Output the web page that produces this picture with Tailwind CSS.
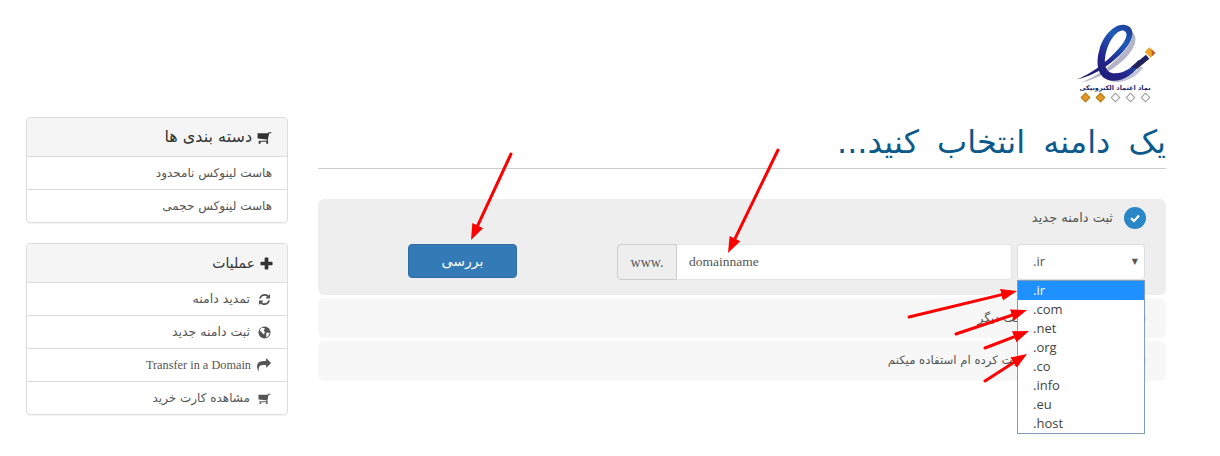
<!DOCTYPE html>
<html lang="fa" dir="rtl">
<head>
<meta charset="utf-8">
<script src="https://cdn.jsdelivr.net/npm/@tailwindcss/browser@4"></script>
</head>
<body class="bg-white">
<div class="relative w-[1220px] h-[456px] overflow-hidden font-['DejaVu_Sans',sans-serif] text-[#333]">

  <header class="h-[117px] pt-[20px] pr-[50px]">
    <div class="w-[110px] flex flex-col items-center">
      <svg class="w-[110px] h-[64px]" viewBox="0 30 330 192" aria-hidden="true">
        <defs>
          <linearGradient id="e1" x1="0" y1="1" x2="1" y2="0">
            <stop offset="0" stop-color="#1a1a5e"/><stop offset=".4" stop-color="#23238a"/><stop offset=".7" stop-color="#1f5cb8"/><stop offset="1" stop-color="#1b2f86"/>
          </linearGradient>
        </defs>
        <path d="M60 218 C105 205 165 160 200 115 C215 92 222 75 212 62 C238 78 225 110 205 135 C170 175 110 210 60 218Z" fill="#b4b4c8"/>
        <path d="M120 190 C135 215 190 222 240 170 L250 172 C215 222 150 232 120 190Z" fill="#c4c4d4"/>
        <path d="M50 208 C90 195 150 150 185 105 C200 85 205 68 192 62 C175 56 150 85 140 120 C130 155 132 190 165 190 C190 190 215 175 235 150 L245 155 C225 190 190 215 155 212 C115 208 105 165 118 120 C130 75 165 40 195 45 C220 48 225 75 205 105 C170 155 100 200 50 208Z" fill="url(#e1)"/>
        <path d="M212 172 L258 134 L268 146 L232 176 Z" fill="#22225e"/>
        <path d="M268 112 L286 128 L272 143 L254 126Z" fill="#eda52a"/>
        <path d="M274 118 L286 128 L276 139Z" fill="#c4572a"/>
      </svg>
      <div class="text-[6.5px] leading-[10px] font-bold text-[#232a6b] whitespace-nowrap -mt-[1px]">نماد اعتماد الکترونیکی</div>
      <div class="flex gap-[8px] mt-[1px]" dir="ltr">
        <span class="w-[7px] h-[7px] rotate-45 bg-[#e09a26] border border-[#b9781a]"></span>
        <span class="w-[7px] h-[7px] rotate-45 bg-[#e09a26] border border-[#b9781a]"></span>
        <span class="w-[7px] h-[7px] rotate-45 border border-[#9a9a9a]"></span>
        <span class="w-[7px] h-[7px] rotate-45 border border-[#9a9a9a]"></span>
        <span class="w-[7px] h-[7px] rotate-45 border border-[#9a9a9a]"></span>
      </div>
    </div>
  </header>

  <div class="flex pr-[54px] gap-[30px]">
    <main class="w-[848px]">
      <h1 class="h-[52px] border-b border-[#ccc] text-[32px] [word-spacing:8px] leading-[50px] text-[#0c5a8c] whitespace-nowrap">یک دامنه انتخاب کنید...</h1>

      <section class="mt-[30px] h-[96px] bg-[#eee] rounded-[6px] pt-[8px] pr-[20px]">
        <div class="flex items-center gap-[11px] h-[22px]">
          <span class="w-[22px] h-[22px] rounded-full bg-[#2a86c6] flex items-center justify-center">
            <svg class="w-[12px] h-[12px]" viewBox="0 0 12 12"><path d="M2 6.200 L5 9 L10 3.400" fill="none" stroke="#fff" stroke-width="2.200"/></svg>
          </span>
          <span class="text-[13px] text-[#555]">ثبت دامنه جدید</span>
        </div>
        <div class="flex mt-[15px] pr-px">
          <div class="relative w-[128px] h-[36px] bg-white border border-[#ddd] rounded-[4px] flex items-center justify-between pl-[7px] pr-[6px]" dir="ltr">
            <span class="text-[13px] font-['Open_Sans',sans-serif] text-[#555] pl-[8px]">.ir</span>
            <span class="text-[8px] text-[#555] leading-none">▼</span>
            <ul class="absolute z-10 left-[-1px] top-[35px] w-[128px] h-[154px] bg-white border border-[#7f9db9] font-['Open_Sans',sans-serif] text-[13px] leading-[19px] text-[#444]">
              <li class="h-[19px] pl-[15px] bg-[#1e90ff] text-white">.ir</li>
              <li class="h-[19px] pl-[15px]">.com</li>
              <li class="h-[19px] pl-[15px]">.net</li>
              <li class="h-[19px] pl-[15px]">.org</li>
              <li class="h-[19px] pl-[15px]">.co</li>
              <li class="h-[19px] pl-[15px]">.info</li>
              <li class="h-[19px] pl-[15px]">.eu</li>
              <li class="h-[19px] pl-[15px]">.host</li>
            </ul>
          </div>
          <div class="flex w-[395px] h-[36px] mr-[5px]" dir="ltr">
            <span class="w-[60px] bg-[#eee] border border-[#ccc] rounded-l-[4px] flex items-center justify-center font-['Liberation_Serif',serif] text-[14px] text-[#555]">www.</span>
            <span class="flex-1 bg-white border border-[#e4e4e4] border-l-0 rounded-r-[4px] flex items-center pl-[12px] font-['Liberation_Serif',serif] text-[13.500px] text-[#555]">domainname</span>
          </div>
          <button class="w-[109px] h-[34px] mr-[100px] bg-[#337ab7] border border-[#2e6da4] rounded-[4px] text-white text-[14px]">بررسی</button>
        </div>
      </section>

      <section class="mt-[3px] h-[40px] bg-[#f7f7f7] rounded-[6px] flex items-center gap-[12px] pr-[20px]">
        <span class="w-[22px] h-[22px] rounded-full bg-[#ddd]"></span>
        <span class="text-[12px] text-[#555]">انتقال دامنه از شرکت دیگر</span>
      </section>
      <section class="mt-[3px] h-[40px] bg-[#f7f7f7] rounded-[6px] flex items-center gap-[12px] pr-[20px]">
        <span class="w-[22px] h-[22px] rounded-full bg-[#ddd]"></span>
        <span class="text-[11.700px] text-[#555]">از دامنه ای که قبلا ثبت کرده ام استفاده میکنم</span>
      </section>
    </main>

    <aside class="w-[262px] flex flex-col gap-[20px]">
      <div class="border border-[#ddd] rounded-[4px] shadow-[0_1px_1px_rgba(0,0,0,.05)] overflow-hidden">
        <div class="h-[39px] bg-[#f5f5f5] border-b border-[#ddd] flex items-center gap-[5px] pr-[15px] text-[16px] text-[#333]">
          <svg class="w-[15px] h-[15px] -scale-x-100 fill-[#333]" viewBox="0 0 1792 1792"><path d="M704 1536q0 52-38 90t-90 38-90-38-38-90 38-90 90-38 90 38 38 90zm896 0q0 52-38 90t-90 38-90-38-38-90 38-90 90-38 90 38 38 90zm128-1088v512q0 24-16.500 42.500t-40.500 21.500l-1044 122q13 60 13 70 0 16-24 64h920q26 0 45 19t19 45-19 45-45 19h-1024q-26 0-45-19t-19-45q0-11 8-31.500t16-36 21.500-40 15.500-29.500l-177-823h-204q-26 0-45-19t-19-45 19-45 45-19h256q16 0 28.500 6.500t19.500 15.500 13 24.500 8 26 5.500 29.500 4.500 26h1201q26 0 45 19t19 45z"/></svg>
          <span>دسته بندی ها</span>
        </div>
        <div class="h-[33px] border-b border-[#ddd] flex items-center pr-[15px] text-[12px] text-[#555]">هاست لینوکس نامحدود</div>
        <div class="h-[32px] flex items-center pr-[15px] text-[12px] text-[#555]">هاست لینوکس حجمی</div>
      </div>

      <div class="border border-[#ddd] rounded-[4px] shadow-[0_1px_1px_rgba(0,0,0,.05)] overflow-hidden">
        <div class="h-[39px] bg-[#f5f5f5] border-b border-[#ddd] flex items-center gap-[5px] pr-[14px] text-[14px] text-[#333]">
          <svg class="w-[13px] h-[13px] fill-[#333]" viewBox="0 0 14 14"><path d="M5 1.500 a1 1 0 0 1 1-1 h2 a1 1 0 0 1 1 1 V5 H12.500 a1 1 0 0 1 1 1 v2 a1 1 0 0 1-1 1 H9 V12.500 a1 1 0 0 1-1 1 h-2 a1 1 0 0 1-1-1 V9 H1.500 a1 1 0 0 1-1-1 v-2 a1 1 0 0 1 1-1 H5Z"/></svg>
          <span>عملیات</span>
        </div>
        <div class="h-[33px] border-b border-[#ddd] flex items-center gap-[8px] pr-[16px] text-[12.500px] text-[#555]">
          <svg class="w-[13px] h-[13px] fill-[#555]" viewBox="0 0 1792 1792"><path d="M1639 1056q0 5-1 7-64 268-268 434.500t-478 166.500q-146 0-282.500-55t-243.500-157l-129 129q-19 19-45 19t-45-19-19-45v-448q0-26 19-45t45-19h448q26 0 45 19t19 45-19 45l-137 137q71 66 161 102t187 36q134 0 250-65t186-179q11-17 53-117 8-23 30-23h192q13 0 22.500 9.500t9.500 22.500zm25-800v448q0 26-19 45t-45 19h-448q-26 0-45-19t-19-45 19-45l138-138q-148-137-349-137-134 0-250 65t-186 179q-11 17-53 117-8 23-30 23h-199q-13 0-22.500-9.500t-9.500-22.500v-7q65-268 270-434.500t480-166.500q146 0 284 55.500t245 156.500l130-129q19-19 45-19t45 19 19 45z"/></svg>
          <span>تمدید دامنه</span>
        </div>
        <div class="h-[33px] border-b border-[#ddd] flex items-center gap-[8px] pr-[16px] text-[12.500px] text-[#555]">
          <svg class="w-[13px] h-[13px]" viewBox="0 0 14 14"><circle cx="7" cy="7" r="6.500" fill="#555"/><path d="M3 2.500 C5 1.500 6.500 2 7.500 3 L6 5 L7.500 6.500 L6.500 9 L5 8 L3.500 6 L2 5.500 Z M9.500 7 L12.500 7.500 L11 11 L9 12 L8.800 9 Z" fill="#fff"/></svg>
          <span>ثبت دامنه جدید</span>
        </div>
        <div class="h-[33px] border-b border-[#ddd] flex items-center gap-[6px] pr-[16px] font-['Liberation_Serif',serif] text-[12.300px] text-[#555]">
          <svg class="w-[14px] h-[14px] fill-[#555]" viewBox="0 0 1792 1792"><path d="M1792 640q0 26-19 45l-512 512q-19 19-45 19t-45-19-19-45v-256h-224q-98 0-175.500 6t-154 21.500-133 42.500-105.500 69.500-80 101-48.500 138.500-17.500 181q0 55 5 123 0 6 2.500 23.500t2.500 26.500q0 15-8.500 25t-23.500 10q-16 0-28-17-7-9-13-22t-13.500-30-10.500-24q-127-285-127-451 0-199 53-333 162-403 875-403h224v-256q0-26 19-45t45-19 45 19l512 512q19 19 19 45z"/></svg>
          <span dir="ltr">Transfer in a Domain</span>
        </div>
        <div class="h-[32px] flex items-center gap-[8px] pr-[16px] text-[12px] text-[#555]">
          <svg class="w-[13px] h-[13px] -scale-x-100 fill-[#555]" viewBox="0 0 1792 1792"><path d="M704 1536q0 52-38 90t-90 38-90-38-38-90 38-90 90-38 90 38 38 90zm896 0q0 52-38 90t-90 38-90-38-38-90 38-90 90-38 90 38 38 90zm128-1088v512q0 24-16.500 42.500t-40.500 21.500l-1044 122q13 60 13 70 0 16-24 64h920q26 0 45 19t19 45-19 45-45 19h-1024q-26 0-45-19t-19-45q0-11 8-31.500t16-36 21.500-40 15.500-29.500l-177-823h-204q-26 0-45-19t-19-45 19-45 45-19h256q16 0 28.500 6.500t19.500 15.500 13 24.500 8 26 5.500 29.500 4.500 26h1201q26 0 45 19t19 45z"/></svg>
          <span>مشاهده کارت خرید</span>
        </div>
      </div>
    </aside>
  </div>

  <svg class="absolute inset-0 z-20 pointer-events-none" width="1220" height="456" viewBox="0 0 1220 456" aria-hidden="true">
    <defs>
      <marker id="h" markerUnits="userSpaceOnUse" markerWidth="18" markerHeight="14" refX="8" refY="6" orient="auto">
        <path d="M0 0 L16 6 L0 12 Z" fill="#f00"/>
      </marker>
    </defs>
    <g stroke="#f00" stroke-width="3" stroke-linecap="round" fill="none">
      <line x1="511" y1="154" x2="474.400" y2="232.700" marker-end="url(#h)"/>
      <line x1="778" y1="150" x2="731.500" y2="245.800" marker-end="url(#h)"/>
      <line x1="909" y1="317" x2="1009.200" y2="292.900" marker-end="url(#h)"/>
      <line x1="956" y1="334" x2="1019.400" y2="312.600" marker-end="url(#h)"/>
      <line x1="985" y1="348" x2="1021.600" y2="333.900" marker-end="url(#h)"/>
      <line x1="985" y1="381" x2="1020.300" y2="358.300" marker-end="url(#h)"/>
    </g>
  </svg>
</div>
</body>
</html>
